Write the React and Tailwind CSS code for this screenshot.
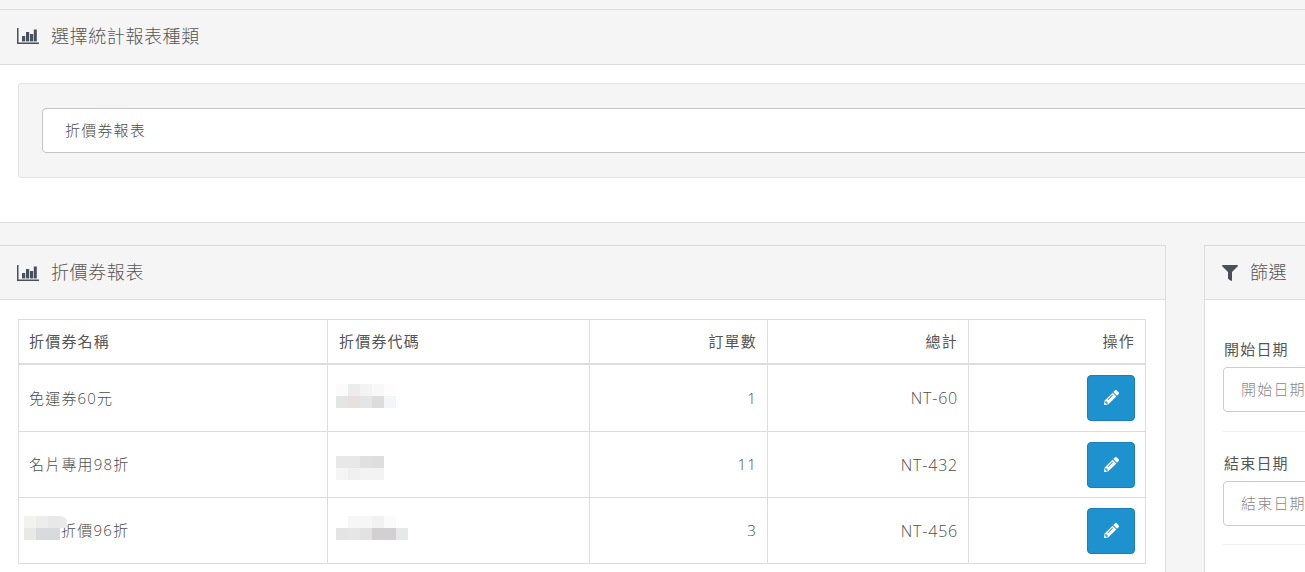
import { FaFilter, FaPencilAlt } from 'react-icons/fa';

const FONT = 'font-["Open_Sans","Noto_Sans_CJK_TC",sans-serif]';

function ChartIcon() {
  return (
    <svg viewBox="0 0 22 16" className="h-[16px] w-[22px] shrink-0 text-[#4a4f5c]" fill="currentColor">
      <path d="M0 0h1.5v14.4H22V16H0z" />
      <rect x="5" y="8" width="3.2" height="5.4" />
      <rect x="9" y="4" width="3.2" height="9.4" />
      <rect x="13" y="6" width="3.2" height="7.4" />
      <rect x="16.8" y="1.5" width="3" height="11.9" />
    </svg>
  );
}

function PanelHeading({ icon, title, className }) {
  return (
    <div className={`flex items-center gap-[12px] border-b border-[#dddddd] bg-[#f5f5f5] text-[18px] font-light tracking-[0.6px] text-[#555555] ${className}`}>
      {icon}
      <span>{title}</span>
    </div>
  );
}

// pixelated patch that hides a value in the screenshot
function Mosaic({ className, rows }) {
  return (
    <div className={`absolute flex flex-col ${className}`}>
      {rows.map((row, i) => (
        <div key={i} className="flex">
          {row.map((color, j) => (
            <div key={j} className="h-[12px] w-[12px]" style={{ background: color }} />
          ))}
        </div>
      ))}
    </div>
  );
}

function EditButton() {
  return (
    <button type="button" className="ml-auto flex h-[46px] w-[48px] items-center justify-center rounded-[4px] border border-[#1b7fb5] bg-[#1e91cf] text-white">
      <FaPencilAlt className="h-[15px] w-[15px]" />
    </button>
  );
}

const rows = [
  { name: '免運券60元', orders: '1', total: 'NT-60', h: 'h-[68px]' },
  { name: '名片專用98折', orders: '11', total: 'NT-432', h: 'h-[66px]' },
  { name: '折價96折', orders: '3', total: 'NT-456', h: 'h-[66px]', indent: true },
];

const th = 'border border-[#dddddd] border-b-2 px-[10px] pb-[1px] font-normal';
const td = 'border border-[#dddddd] px-[10px]';

function FilterField({ label, pad }) {
  return (
    <div className={`border-b border-[#eeeeee] ${pad}`}>
      <div className="mb-[7px] h-[21px] pl-[1px] text-[15px] leading-[21px] tracking-[1.2px] text-[#555555]">{label}</div>
      <div className="flex h-[45px] items-center rounded-[4px] border border-[#cccccc] bg-white pl-[17px] text-[15px] font-light tracking-[1.2px] text-[#888888]">
        {label}
      </div>
    </div>
  );
}

export default function App() {
  return (
    <div className={`relative h-[572px] w-[1305px] overflow-hidden bg-[#f5f5f5] pt-[9px] ${FONT}`}>
      <div className="border-y border-[#dddddd] bg-white pb-[44px]">
        <PanelHeading icon={<ChartIcon />} title="選擇統計報表種類" className="h-[55px] pb-[2px] pl-[17px]" />
        <div className="mt-[18px] ml-[18px] w-[1400px] rounded-[3px] border border-[#e3e3e3] bg-[#f5f5f5] py-[24px] pl-[23px]">
          <div className="flex h-[45px] items-center rounded-[4px] border border-[#c4c4c4] bg-white pl-[22px] text-[15px] font-light tracking-[1.2px] text-[#4d4d4d]">
            折價券報表
          </div>
        </div>
      </div>

      <div className="mt-[22px] flex items-start">
        <div className="h-[400px] w-[1166px] shrink-0 border-r border-t border-[#dddddd] bg-white">
          <PanelHeading icon={<ChartIcon />} title="折價券報表" className="h-[54px] pl-[17px]" />
          <div className="pt-[19px] pl-[18px]">
            <table className="w-[1128px] table-fixed border-collapse text-[15px] tracking-[1.2px] text-[#555555]">
              <thead>
                <tr className="h-[44px]">
                  <th className={`${th} w-[309px] text-left`}>折價券名稱</th>
                  <th className={`${th} w-[262px] pl-[11px] text-left`}>折價券代碼</th>
                  <th className={`${th} w-[178px] text-right`}>訂單數</th>
                  <th className={`${th} w-[201px] text-right`}>總計</th>
                  <th className={`${th} text-right`}>操作</th>
                </tr>
              </thead>
              <tbody className="font-light text-[#4d4d4d]">
                {rows.map((row) => (
                  <tr key={row.total} className={row.h}>
                    <td className={td}>
                      {row.indent ? <span className="pl-[32px]">{row.name}</span> : row.name}
                    </td>
                    <td className={td} />
                    <td className={`${td} text-right`}>{row.orders}</td>
                    <td className={`${td} text-right text-[16px] tracking-[0.8px]`}>{row.total}</td>
                    <td className={td}><EditButton /></td>
                  </tr>
                ))}
              </tbody>
            </table>
          </div>
        </div>

        <div className="ml-[38px] h-[400px] w-[300px] shrink-0 border-x border-t border-[#dddddd] bg-white">
          <PanelHeading icon={<FaFilter className="h-[16px] w-[16px] text-[#4a4f5c]" />} title="篩選" className="h-[54px] pl-[17px]" />
          <div className="flex flex-col gap-[21px] pt-[39px] pl-[18px]">
            <FilterField label="開始日期" pad="pb-[19px]" />
            <FilterField label="結束日期" pad="pb-[18px]" />
          </div>
        </div>
      </div>

      <Mosaic className="top-[384px] left-[336px]" rows={[['#fbfbfb', '#ececec', '#f3f3f3', '#f8f8f8', '#fdfdfd'], ['#e4e6e6', '#e6e1de', '#e4e5e7', '#dcdcdc', '#f4f5f8']]} />
      <Mosaic className="top-[456px] left-[336px]" rows={[['#e8e8e8', '#e8e8e8', '#e0e0e0', '#dedede'], ['#f5f5f5', '#f0f0f0', '#f3f3f3', '#f3f3f3']]} />
      <Mosaic className="top-[516px] left-[336px]" rows={[['#ffffff', '#f6f6f6', '#f6f6f6', '#f2f2f2', '#fbfbfb', '#ffffff'], ['#e4e4e4', '#e6e6e6', '#e2e2e2', '#d2d0d0', '#d2d0d0', '#e6e8ea']]} />
      <Mosaic className="top-[516px] left-[24px]" rows={[['#f2f2f0', '#ededed', '#e8e8e8'], ['#e8e8e6', '#d9dade', '#d9dade']]} />
      <div className="absolute top-[516px] left-[60px] h-[12px] w-[7px] rounded-tr-[6px] bg-[#eaeaea]" />
    </div>
  );
}
